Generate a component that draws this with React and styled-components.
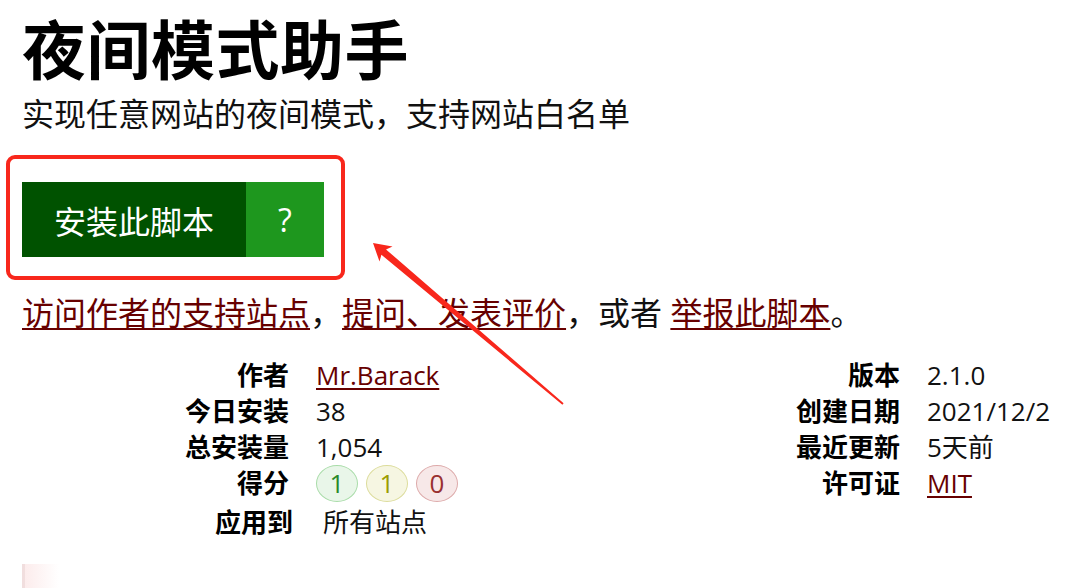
import React from 'react';
import styled, { createGlobalStyle } from 'styled-components';

const GlobalStyle = createGlobalStyle`
    html, body {
        margin: 0;
        padding: 0;
        overflow: hidden;
        background: #fff;
    }
    body {
        font-family: "Open Sans", "Noto Sans CJK SC", sans-serif;
        color: #000;
    }
`

const Page = styled.div`
    position: relative;
    width: 1080px;
    height: 588px;
    padding: 18px 0 0 22px;
    box-sizing: border-box;
`

const Title = styled.h1`
    margin: 0;
    font-size: 64px;
    line-height: 64px;
    font-weight: 700;
    letter-spacing: 0.5px;
`

const Subtitle = styled.p`
    margin: 16px 0 0;
    font-size: 32px;
    line-height: 32px;
    font-weight: 400;
    color: #111;
`

const InstallArea = styled.div`
    display: flex;
    margin-top: 52px;
    width: 302px;
    height: 75px;
`

const InstallButton = styled.a`
    display: flex;
    align-items: center;
    justify-content: center;
    width: ${({ $width }) => $width}px;
    background: ${({ $help }) => $help ? '#1e971e' : '#005200'};
    color: #fff;
    font-size: 32px;
    text-decoration: none;
`

const LinksLine = styled.p`
    margin: 40px 0 0;
    font-size: 32px;
    line-height: 32px;
    color: #111;
`

const Link = styled.a`
    color: #670000;
    text-decoration: underline;
    text-decoration-thickness: 2px;
    text-underline-offset: 3px;
`

const Stats = styled.div`
    display: flex;
    align-items: flex-start;
    margin-top: 28px;
`

const StatList = styled.dl`
    display: grid;
    grid-template-columns: ${({ $labelWidth }) => $labelWidth}px auto;
    grid-auto-rows: 36px;
    column-gap: 27px;
    align-items: center;
    margin: 0;
    width: ${({ $width }) => $width ? `${$width}px` : 'auto'};
    font-size: 26px;
    line-height: 36px;
`

const Label = styled.dt`
    text-align: right;
    font-weight: 700;
    margin-top: ${({ $drop }) => $drop || 0}px;
    margin-right: ${({ $shift }) => -($shift || 0)}px;
`

const Value = styled.dd`
    margin: ${({ $drop }) => $drop || 0}px 0 0 ${({ $indent }) => $indent || 0}px;
    color: #111;
    display: flex;
    gap: 8px;
    align-items: center;
`

const ratingColors = {
    good: { border: '#a9dca9', bg: '#e9f6e9', fg: '#2a8a2a' },
    ok: { border: '#dcdc9c', bg: '#f6f6e2', fg: '#9c9c00' },
    bad: { border: '#ddaaaa', bg: '#f7e8e8', fg: '#993030' },
}

const Rating = styled.span`
    display: inline-flex;
    align-items: center;
    justify-content: center;
    width: 40px;
    height: 35px;
    border: 1.5px solid ${({ $kind }) => ratingColors[$kind].border};
    background: ${({ $kind }) => ratingColors[$kind].bg};
    color: ${({ $kind }) => ratingColors[$kind].fg};
    border-radius: 50%;
    font-size: 26px;
    line-height: 1;
`

const Description = styled.div`
    margin-top: 27px;
    width: 200px;
    height: 40px;
    border-left: 3px solid #f1dede;
    background: linear-gradient(to right, #fcecec, #ffffff 34px);
`

const Annotation = styled.svg`
    position: absolute;
    top: 0;
    left: 0;
    pointer-events: none;
`

const App = () => {
    return (
        <Page>
            <GlobalStyle />
            <Title>夜间模式助手</Title>
            <Subtitle>实现任意网站的夜间模式，支持网站白名单</Subtitle>
            <InstallArea>
                <InstallButton $width={224}>安装此脚本</InstallButton>
                <InstallButton $width={78} $help>?</InstallButton>
            </InstallArea>
            <LinksLine>
                <Link>访问作者的支持站点</Link>，<Link>提问、发表评价</Link>，或者 <Link>举报此脚本</Link>。
            </LinksLine>
            <Stats>
                <StatList $labelWidth={267} $width={545}>
                    <Label>作者</Label>
                    <Value><Link>Mr.Barack</Link></Value>
                    <Label>今日安装</Label>
                    <Value>38</Value>
                    <Label>总安装量</Label>
                    <Value>1,054</Value>
                    <Label>得分</Label>
                    <Value>
                        <Rating $kind="good">1</Rating>
                        <Rating $kind="ok">1</Rating>
                        <Rating $kind="bad">0</Rating>
                    </Value>
                    <Label $drop={6} $shift={4}>应用到</Label>
                    <Value $drop={6} $indent={7}>所有站点</Value>
                </StatList>
                <StatList $labelWidth={333}>
                    <Label>版本</Label>
                    <Value>2.1.0</Value>
                    <Label>创建日期</Label>
                    <Value>2021/12/2</Value>
                    <Label>最近更新</Label>
                    <Value>5天前</Value>
                    <Label>许可证</Label>
                    <Value><Link>MIT</Link></Value>
                </StatList>
            </Stats>
            <Description />
            <Annotation width="1080" height="588" viewBox="0 0 1080 588">
                <rect x="8" y="157" width="335" height="121" rx="7" fill="none" stroke="#f8271c" strokeWidth="4" />
                <polygon
                    fill="#f8271c"
                    points="373,243 392.5,246.4 386,249.4 563.6,403.2 562.4,404.8 381.4,254.8 379.5,261.6"
                />
            </Annotation>
        </Page>
    )
}

export default App;
